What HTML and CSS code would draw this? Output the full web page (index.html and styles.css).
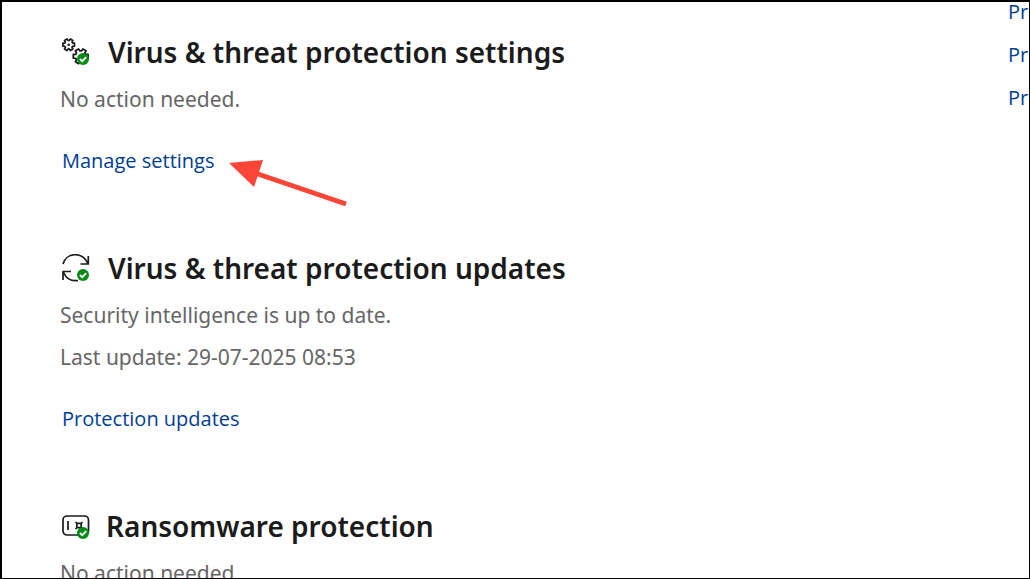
FILE: index.html
```html
<!DOCTYPE html>
<html lang="en">
<head>
<meta charset="utf-8">
<title>Virus &amp; threat protection</title>
<link rel="stylesheet" href="styles.css">
</head>
<body>
<div class="window">
  <main class="content">
    <section class="section">
      <div class="heading">
        <svg class="icon" viewBox="0 0 28 28" aria-hidden="true">
          <defs>
            <path id="gear" d="M12.500 5.200V8.200L10.600 8.300 10 9.300 10.900 11 8.400 12.500 7.300 10.900H6.100L5 12.500 2.500 11 3.400 9.300 2.800 8.300.9 8.200V5.200L2.800 5.100 3.400 4.100 2.500 2.400 5 .9 6.100 2.500H7.300L8.400.9 10.900 2.400 10 4.100 10.600 5.100Z"/>
          </defs>
          <use class="line" href="#gear"/>
          <use class="line line-large" href="#gear" transform="translate(10.2 9.8) scale(1.27)"/>
          <circle class="dot" cx="6.700" cy="6.700" r="1.300"/>
          <circle class="badge" cx="21" cy="21" r="6"/>
          <path class="tick" d="M18 21l2.200 2.200 4-4"/>
        </svg>
        <h2>Virus &amp; threat protection settings</h2>
      </div>
      <p>No action needed.</p>
      <div class="action">
        <a href="#settings">Manage settings</a>
        <svg class="arrow" viewBox="0 0 120 50" aria-hidden="true">
          <path class="arrow-head" d="M1 4L35 1L26 28Z"/>
          <path class="arrow-shaft" d="M27 14L118 45"/>
        </svg>
      </div>
    </section>
    <section class="section">
      <div class="heading">
        <svg class="icon" viewBox="0 0 28 28" aria-hidden="true">
          <g class="line">
            <path d="M1 10C4-1.500 20-3 26 9.500M26.300 2v8H18.500"/>
            <path d="M1 26v-8.500h8M1.500 18.500C4 24 9 27.500 16 26.500"/>
          </g>
          <circle class="badge" cx="21" cy="21" r="6"/>
          <path class="tick" d="M18 21l2.200 2.200 4-4"/>
        </svg>
        <h2>Virus &amp; threat protection updates</h2>
      </div>
      <p>Security intelligence is up to date.</p>
      <p>Last update: 29-07-2025 08:53</p>
      <div class="action"><a href="#updates">Protection updates</a></div>
    </section>
    <section class="section">
      <div class="heading heading-close">
        <svg class="icon" viewBox="0 0 28 28" aria-hidden="true">
          <g class="line">
            <rect x="1" y="4" width="25.500" height="19" rx="4"/>
            <path d="M6 9v9M13.500 10l2 2M20.500 10l-2 2M13.500 17l2-2M20.500 17l-2-2"/>
            <rect x="14.800" y="11.300" width="4.400" height="4.400" rx="1"/>
          </g>
          <circle class="badge" cx="21" cy="21" r="6"/>
          <path class="tick" d="M18 21l2.200 2.200 4-4"/>
        </svg>
        <h2>Ransomware protection</h2>
      </div>
      <p>No action needed.</p>
    </section>
  </main>
  <nav class="side">
    <a href="#p1">Pri</a>
    <a href="#p2">Pri</a>
    <a href="#p3">Pri</a>
  </nav>
</div>
</body>
</html>
```
FILE: styles.css
```css
* { box-sizing: border-box; }
body {
  margin: 0;
  background: #fff;
  color: #1b1b1b;
  font-family: "Noto Sans", "Open Sans", sans-serif;
}
.window {
  display: flex;
  height: 100vh;
  overflow: hidden;
  border: solid #000;
  border-width: 2px 1px 1px 2px;
}
.content {
  flex: 1;
  min-width: 0;
  padding: 29px 0 0 58px;
}
.section { margin-bottom: 65px; }
.heading {
  display: flex;
  align-items: center;
  gap: 18px;
  height: 42px;
  margin-bottom: 5px;
  padding-left: 2px;
}
.heading-close { gap: 16px; }
h2 {
  margin: 0;
  font-size: 28px;
  font-weight: 600;
  line-height: 42px;
  white-space: nowrap;
}
p {
  margin: 0;
  color: #666;
  font-size: 21px;
  line-height: 42px;
}
.action {
  display: flex;
  gap: 13px;
  height: 42px;
  margin-top: 20px;
  padding-left: 2px;
}
a {
  color: #003e92;
  font-family: "Open Sans", "Noto Sans", sans-serif;
  font-size: 20px;
  line-height: 42px;
  text-decoration: none;
  white-space: nowrap;
}
.side {
  display: flex;
  flex-direction: column;
  gap: 1px;
  width: 21px;
  margin-top: -11px;
  overflow: hidden;
}
.icon { flex: none; width: 28px; height: 28px; }
.line {
  fill: none;
  stroke: #1b1b1b;
  stroke-width: 1.7;
  stroke-linejoin: round;
}
.line-large { stroke-width: 1.4; }
.dot { fill: #1b1b1b; }
.badge { fill: #078b18; }
.tick { fill: none; stroke: #fff; stroke-width: 1.8; }
.arrow { flex: none; width: 120px; height: 50px; margin-top: 19px; }
.arrow-head { fill: #ff4438; }
.arrow-shaft { fill: none; stroke: #ff4438; stroke-width: 5; }
```
